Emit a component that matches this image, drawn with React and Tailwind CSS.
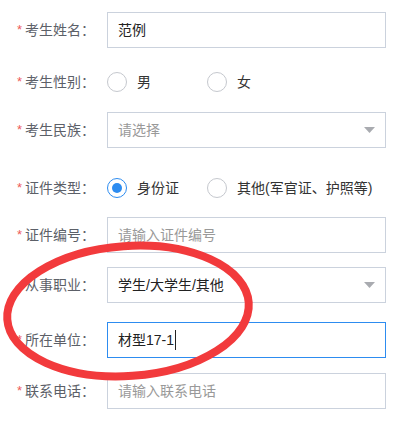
import React from "react";

const font = { fontFamily: '"Liberation Sans", "Noto Sans CJK SC", sans-serif' };

function Label({ text, required = true }) {
  return (
    <div className="w-[107px] shrink-0 flex items-center pl-[17px] text-[14px] text-[#5c6068]">
      <span className={`w-[8px] text-[#ee5a5a] text-[13px] ${required ? "" : "invisible"}`}>*</span>
      <span>{text}</span>
    </div>
  );
}

function Radio({ checked, label }) {
  return (
    <label className="flex items-center gap-[10px] text-[14px] text-[#333]">
      {checked ? (
        <span className="w-[20px] h-[20px] rounded-full border border-[#2d8cf0] flex items-center justify-center">
          <span className="w-[10px] h-[10px] rounded-full bg-[#2d8cf0]" />
        </span>
      ) : (
        <span className="w-[20px] h-[20px] rounded-full border border-[#c5c8ce]" />
      )}
      <span>{label}</span>
    </label>
  );
}

function Box({ children, focused, arrow }) {
  return (
    <div
      className={`w-[279px] h-[36px] border ${
        focused ? "border-[#2d8cf0]" : "border-[#cbd2dd]"
      } bg-white flex items-center pl-[10px] pr-[10px] text-[14px]`}
    >
      <div className="flex-1 flex items-center">{children}</div>
      {arrow && (
        <svg width="11" height="6" viewBox="0 0 11 6">
          <path d="M0 0 H11 L5.5 6 Z" fill="#a9abb0" />
        </svg>
      )}
    </div>
  );
}

export default function App() {
  return (
    <div className="relative w-[408px] h-[421px] bg-white overflow-hidden" style={font}>
      <div className="flex flex-col">
        <div className="flex items-center h-[36px] mt-[12px]">
          <Label text="考生姓名：" />
          <Box><span className="text-[#222]">范例</span></Box>
        </div>
        <div className="flex items-center h-[36px] mt-[16px]">
          <Label text="考生性别：" />
          <div className="flex items-center gap-[56px]">
            <Radio label="男" />
            <Radio label="女" />
          </div>
        </div>
        <div className="flex items-center h-[36px] mt-[12px]">
          <Label text="考生民族：" />
          <Box arrow><span className="text-[#999]">请选择</span></Box>
        </div>
        <div className="flex items-center h-[36px] mt-[22px]">
          <Label text="证件类型：" />
          <div className="flex items-center gap-[28px]">
            <Radio checked label="身份证" />
            <Radio label="其他(军官证、护照等)" />
          </div>
        </div>
        <div className="flex items-center h-[36px] mt-[11px]">
          <Label text="证件编号：" />
          <Box><span className="text-[#999]">请输入证件编号</span></Box>
        </div>
        <div className="flex items-center h-[36px] mt-[14px]">
          <Label text="从事职业：" required={false} />
          <Box arrow><span className="text-[#222]">学生/大学生/其他</span></Box>
        </div>
        <div className="flex items-center h-[36px] mt-[19px]">
          <Label text="所在单位：" />
          <Box focused>
            <span className="text-[#222]">材型17-1</span>
            <span className="w-[1px] h-[20px] bg-[#222] ml-[1px]" />
          </Box>
        </div>
        <div className="flex items-center h-[36px] mt-[15px]">
          <Label text="联系电话：" />
          <Box><span className="text-[#999]">请输入联系电话</span></Box>
        </div>
      </div>
      <svg className="absolute left-0 top-0 pointer-events-none" width="408" height="421">
        <ellipse
          cx="128"
          cy="311"
          rx="121"
          ry="65"
          transform="rotate(-4 128 311)"
          fill="none"
          stroke="#f23a3c"
          strokeWidth="8"
        />
      </svg>
    </div>
  );
}
